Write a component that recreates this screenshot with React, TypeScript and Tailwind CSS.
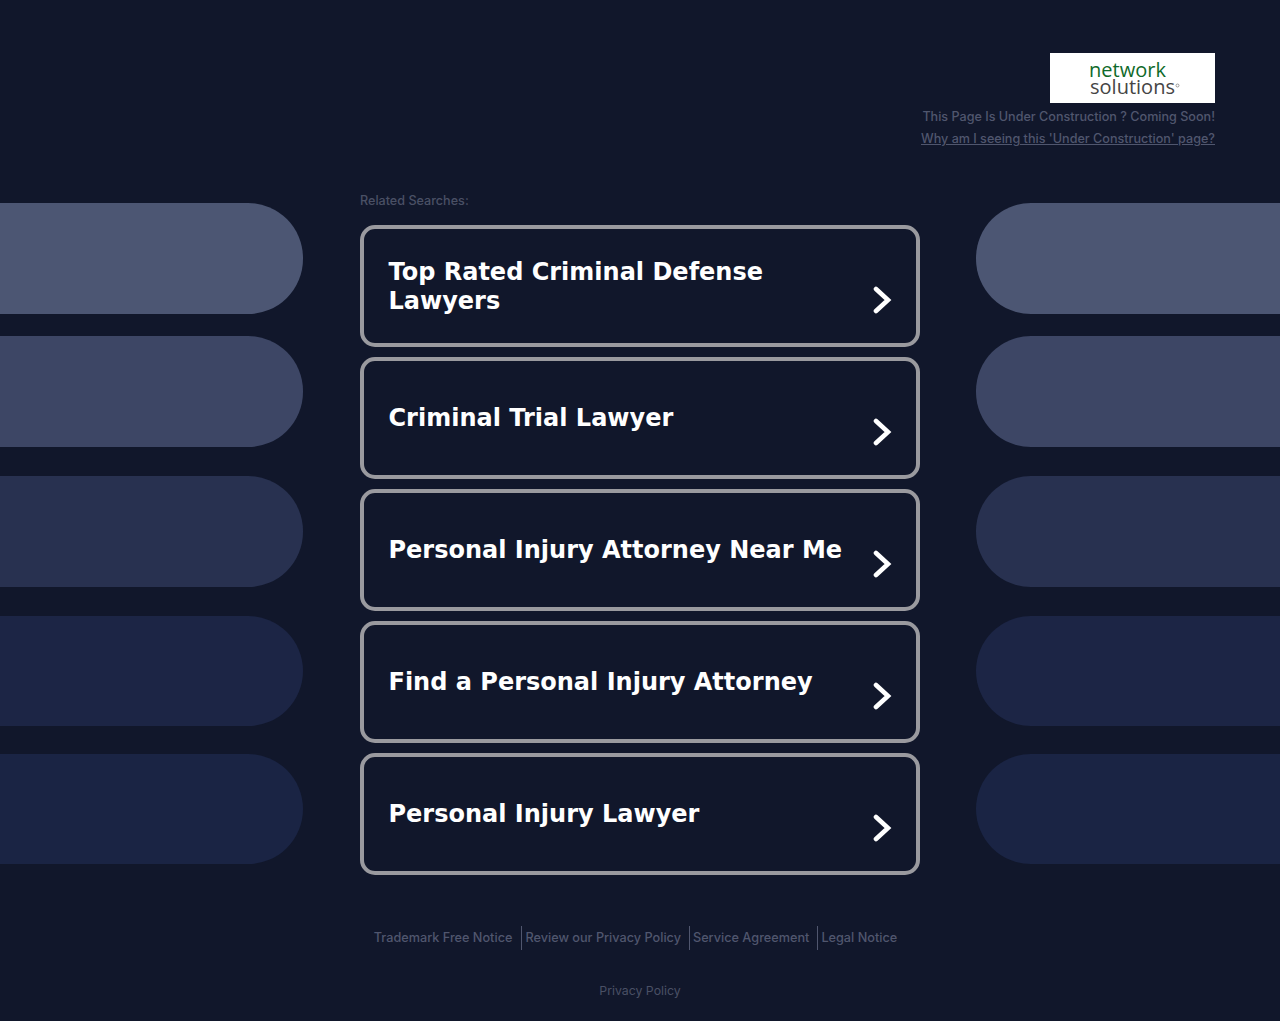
const items = [
  "Top Rated Criminal Defense Lawyers",
  "Criminal Trial Lawyer",
  "Personal Injury Attorney Near Me",
  "Find a Personal Injury Attorney",
  "Personal Injury Lawyer",
];

function Pills({ side }: { side: "left" | "right" }) {
  const shape = side === "left" ? "rounded-r-[55px]" : "rounded-l-[55px]";
  return (
    <div className="flex flex-col pt-[11px]">
      <div className={`h-[111px] bg-[#4c5673] ${shape}`} />
      <div className={`mt-[22px] h-[111px] bg-[#3d4665] ${shape}`} />
      <div className={`mt-[29px] h-[111px] bg-[#283150] ${shape}`} />
      <div className={`mt-[29px] h-[110px] bg-[#1c2545] ${shape}`} />
      <div className={`mt-[28px] h-[110px] bg-[#1a2444] ${shape}`} />
    </div>
  );
}

function Chevron() {
  return (
    <svg className="mt-[27px] shrink-0" width="20" height="28" viewBox="0 0 20 28" fill="none">
      <path d="M4 3 L16 14 L4 25" stroke="#ffffff" strokeWidth="4.6" strokeLinecap="round" strokeLinejoin="miter" />
    </svg>
  );
}

function Logo() {
  return (
    <svg className="block bg-white" width="165" height="50" viewBox="0 0 165 50">
      <text x="39" y="24" fontFamily="'Open Sans', sans-serif" fontSize="20.5" fill="#0f6a2a" textLength="77" lengthAdjust="spacingAndGlyphs">network</text>
      <text x="40" y="40.5" fontFamily="'Open Sans', sans-serif" fontSize="20.5" fill="#454545" textLength="85" lengthAdjust="spacingAndGlyphs">solutions</text>
      <circle cx="127.5" cy="32.5" r="1.5" fill="none" stroke="#777777" strokeWidth="0.7" />
    </svg>
  );
}

export default function App() {
  return (
    <div className="min-h-[1021px] overflow-hidden bg-[#11172b] font-['Inter',sans-serif]">
      <header className="flex h-[192px] flex-col items-end pr-[65px] pt-[53px]">
        <Logo />
        <p className="mt-[5px] text-[12.6px] font-medium leading-[18px] text-[#50566e]">This Page Is Under Construction ? Coming Soon!</p>
        <a className="mt-[4px] text-[12.6px] font-medium leading-[18px] text-[#50566e] underline">Why am I seeing this 'Under Construction' page?</a>
      </header>
      <div className="flex">
        <div className="w-[303px] shrink-0">
          <Pills side="left" />
        </div>
        <main className="ml-[57px] w-[560px] shrink-0">
          <p className="text-[12.6px] font-medium leading-[18px] text-[#4a5065]">Related Searches:</p>
          <div className="mt-[15px] flex flex-col gap-[10px]">
            {items.map((t, i) => (
              <a key={t} className="flex h-[122px] items-center justify-between rounded-[15px] border-[4.5px] border-[#9a9a9f] pl-[24.5px] pr-[24.5px]">
                <span className={`max-w-[470px] font-['DejaVu_Sans',sans-serif] text-[24px] font-bold leading-[29px] text-white ${i === 0 ? "mt-[2px]" : ""}`}>{t}</span>
                <Chevron />
              </a>
            ))}
          </div>
        </main>
        <div className="ml-[56px] flex-1">
          <Pills side="right" />
        </div>
      </div>
      <footer className="ml-[360px] mt-[51px] w-[560px]">
        <div className="flex h-[24px] items-center justify-center pr-[6px] text-[12.7px] font-medium text-[#50566e]">
          <span className="pr-[9px]">Trademark Free Notice</span>
          <span className="border-l border-[#50566e] px-[3px] pr-[8px] leading-[24px]">Review our Privacy Policy</span>
          <span className="border-l border-[#50566e] px-[3px] pr-[8px] leading-[24px]">Service Agreement</span>
          <span className="border-l border-[#50566e] px-[3px] leading-[24px]">Legal Notice</span>
        </div>
        <p className="mt-[32px] text-center text-[12.3px] leading-[18px] text-[#4a5065]">Privacy Policy</p>
      </footer>
    </div>
  );
}
